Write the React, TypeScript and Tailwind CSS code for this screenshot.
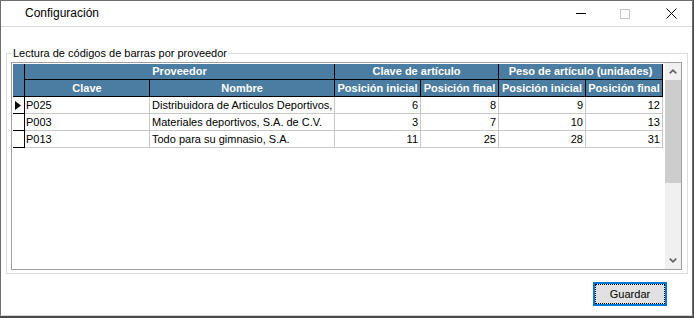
import React from "react";

type Row = { clave: string; nombre: string; a: number; b: number; c: number; d: number };

const rows: Row[] = [
  { clave: "P025", nombre: "Distribuidora de Articulos Deportivos, S.A. de C.V.", a: 6, b: 8, c: 9, d: 12 },
  { clave: "P003", nombre: "Materiales deportivos, S.A. de C.V.", a: 3, b: 7, c: 10, d: 13 },
  { clave: "P013", nombre: "Todo para su gimnasio, S.A.", a: 11, b: 25, c: 28, d: 31 },
];

const hdr =
  "bg-[#4b7ca1] border-r border-b border-black text-white font-bold text-[11px] leading-none flex items-center justify-center overflow-hidden whitespace-nowrap";
const cell =
  "border-r border-b border-[#c8c8c8] text-[11px] leading-none flex items-center overflow-hidden whitespace-nowrap text-black";

function Chevron({ up }: { up: boolean }) {
  return (
    <svg width="8" height="5" viewBox="0 0 8 5">
      <polyline
        points={up ? "0.7,4.3 4,1.2 7.3,4.3" : "0.7,0.7 4,3.8 7.3,0.7"}
        fill="none"
        stroke="#606060"
        strokeWidth="1.6"
      />
    </svg>
  );
}

export default function App() {
  return (
    <div className="w-[694px] h-[318px] bg-[#4a4a4a] font-['Liberation_Sans',Arial,sans-serif]">
      <div className="w-[693px] h-[316px] bg-white border-x border-t border-[#6d6d6d] border-b border-b-[#d6d6d6] flex flex-col">
        {/* title bar */}
        <div className="h-[26px] shrink-0 border-b border-[#dadada] flex items-center">
          <span className="pl-[24px] text-[12px] text-black leading-none pb-[1px]">Configuración</span>
          <div className="ml-auto flex items-center mr-[15px]">
            <div className="w-[10px] h-px bg-black" />
            <div className="ml-[34px] w-[10px] h-[10px] border border-[#c6c6c6]" />
            <svg className="ml-[36px]" width="11" height="11" viewBox="0 0 11 11">
              <path d="M0.5 0.5 L10.5 10.5 M10.5 0.5 L0.5 10.5" stroke="#000" strokeWidth="1" />
            </svg>
          </div>
        </div>

        {/* group box */}
        <fieldset className="mt-[20px] ml-[5px] mr-[4px] border border-[#dcdcdc] min-w-0">
          <legend className="ml-[5px] px-[1px] text-[11px] leading-[13px] text-black">
            Lectura de códigos de barras por proveedor
          </legend>
          <div className="mt-[2px] ml-[4px] mb-[3px] w-[671px] h-[208px] border border-[#a0a0a0] flex">
            <div className="flex-1 pl-px pt-px bg-white">
              <div className="grid grid-cols-[12px_125px_185px_86px_78px_87px_77px] grid-rows-[16px_17px_17px_17px_17px] w-[650px]">
                <div className={`${hdr} row-span-2`} />
                <div className={`${hdr} col-span-2`}>Proveedor</div>
                <div className={`${hdr} col-span-2`}>Clave de artículo</div>
                <div className={`${hdr} col-span-2`}>Peso de artículo (unidades)</div>
                <div className={hdr}>Clave</div>
                <div className={hdr}>Nombre</div>
                <div className={hdr}>Posición inicial</div>
                <div className={hdr}>Posición final</div>
                <div className={hdr}>Posición inicial</div>
                <div className={hdr}>Posición final</div>
                {rows.map((r, i) => (
                  <React.Fragment key={r.clave}>
                    <div className="border-r border-b border-black bg-white flex items-center pl-[2px]">
                      {i === 0 && (
                        <svg width="6" height="9" viewBox="0 0 6 9">
                          <polygon points="0,0 6,4.5 0,9" fill="#000" />
                        </svg>
                      )}
                    </div>
                    <div className={`${cell} pl-[1px]`}>{r.clave}</div>
                    <div className={`${cell} pl-[2px]`}>{r.nombre}</div>
                    <div className={`${cell} justify-end pr-[2px]`}>{r.a}</div>
                    <div className={`${cell} justify-end pr-[2px]`}>{r.b}</div>
                    <div className={`${cell} justify-end pr-[2px]`}>{r.c}</div>
                    <div className={`${cell} justify-end pr-[2px]`}>{r.d}</div>
                  </React.Fragment>
                ))}
              </div>
            </div>
            <div className="w-[16px] bg-[#f0f0f0] flex flex-col">
              <div className="h-[17px] flex items-center justify-center">
                <Chevron up />
              </div>
              <div className="h-[103px] bg-[#cdcdcd]" />
              <div className="flex-1" />
              <div className="h-[17px] flex items-center justify-center">
                <Chevron up={false} />
              </div>
            </div>
          </div>
        </fieldset>

        {/* button */}
        <div className="flex justify-end mt-[8px] mr-[25px]">
          <button className="w-[74px] h-[24px] border-2 border-[#0078d7] bg-[#e1e1e1] p-0">
            <div className="w-full h-full border border-dotted border-black flex items-center justify-center text-[11px] leading-none text-black">
              Guardar
            </div>
          </button>
        </div>
      </div>
    </div>
  );
}
